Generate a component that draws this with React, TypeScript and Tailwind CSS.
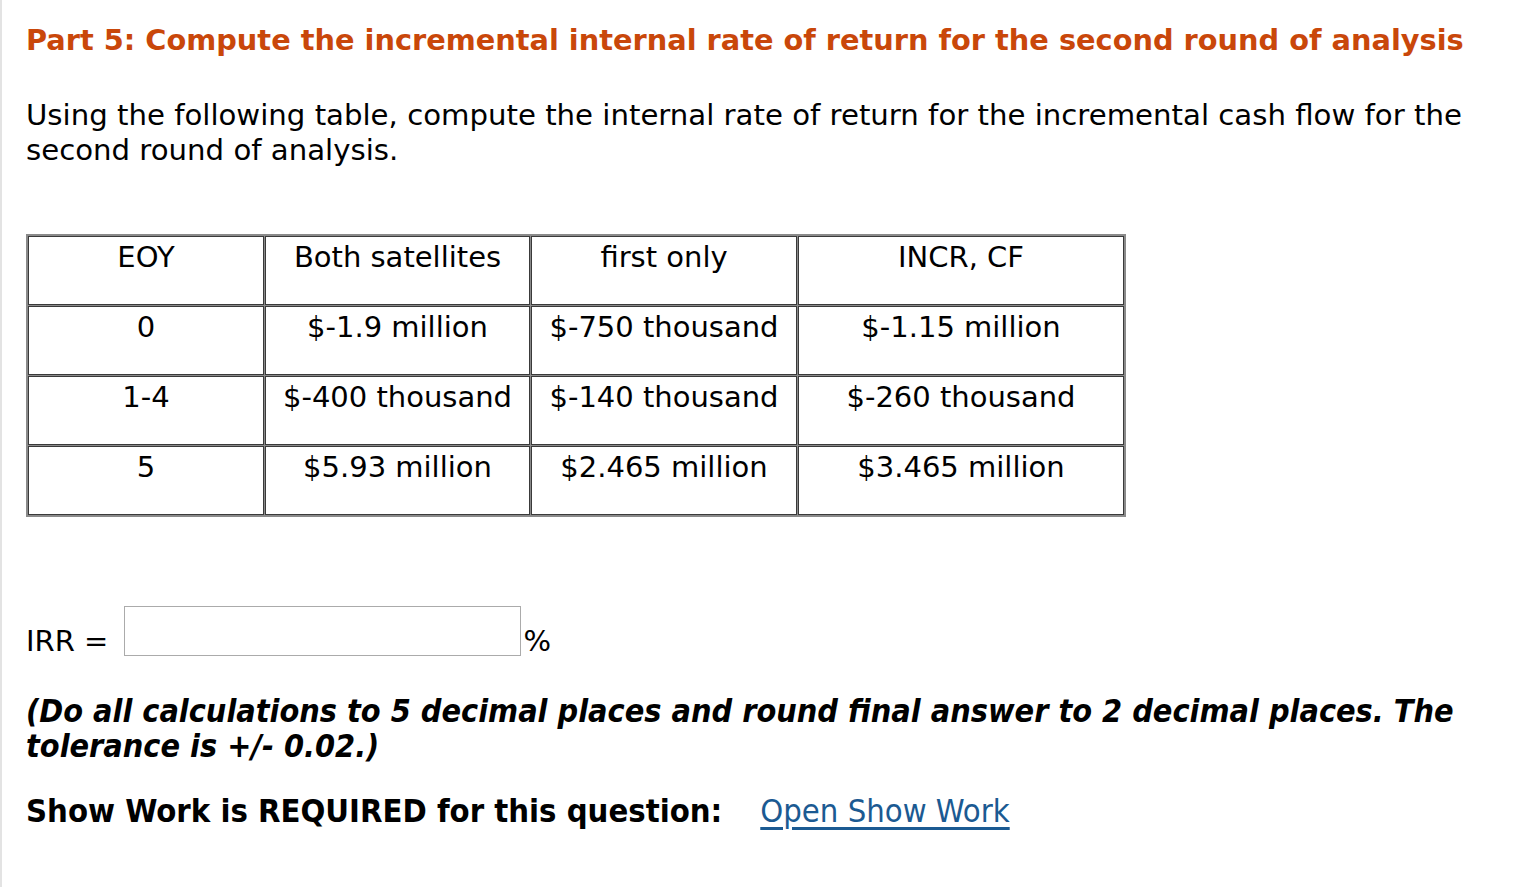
const rows = [
    ['EOY', 'Both satellites', 'first only', 'INCR, CF'],
    ['0', '$-1.9 million', '$-750 thousand', '$-1.15 million'],
    ['1-4', '$-400 thousand', '$-140 thousand', '$-260 thousand'],
    ['5', '$5.93 million', '$2.465 million', '$3.465 million'],
];

const widths = ['w-[236px]', 'w-[265px]', 'w-[266px]', 'w-[326px]'];

export default function App() {
    return (
        <div className="min-h-screen border-l-2 border-[#e3e3e3] bg-white pl-[24px] font-['DejaVu_Sans',Verdana,sans-serif] text-[29px] leading-[35px] text-black">
            <h1 className="pt-[23px] text-[28.8px] font-bold text-[#c9470a]">Part 5: Compute the incremental internal rate of return for the second round of analysis</h1>

            <p className="mt-[40px] w-[1450px] text-[29.2px]">Using the following table, compute the internal rate of return for the incremental cash flow for the second round of analysis.</p>

            <table className="mt-[66px] border-separate border-spacing-[1px] border border-[#8a8a8a] bg-[#8a8a8a]">
                <tbody>
                    {rows.map((row, i) => (
                        <tr key={i}>
                            {row.map((cell, j) => (
                                <td key={j} className={`h-[69px] ${widths[j]} border border-[#3a3a3a] bg-white pt-[3px] text-center align-top whitespace-nowrap`}>
                                    {cell}
                                </td>
                            ))}
                        </tr>
                    ))}
                </tbody>
            </table>

            <div className="mt-[89px] flex items-end">
                <span className="-mb-[3px] mr-[16px]">IRR =</span>
                <input className="h-[50px] w-[397px] border border-[#ababab] bg-white outline-none" />
                <span className="-mb-[3px] ml-[2px]">%</span>
            </div>

            <p className="mt-[38px] w-[1460px] font-['DejaVu_Sans_Condensed','DejaVu_Sans',sans-serif] text-[32.1px] font-bold italic">(Do all calculations to 5 decimal places and round final answer to 2 decimal places. The tolerance is +/- 0.02.)</p>

            <div className="mt-[30px] flex items-baseline font-['DejaVu_Sans_Condensed','DejaVu_Sans',sans-serif] text-[32.5px]">
                <span className="font-bold">Show Work is REQUIRED for this question:</span>
                <a href="#" className="ml-[38px] text-[#1b5a92] underline underline-offset-[5px]">Open Show Work</a>
            </div>
        </div>
    );
}
